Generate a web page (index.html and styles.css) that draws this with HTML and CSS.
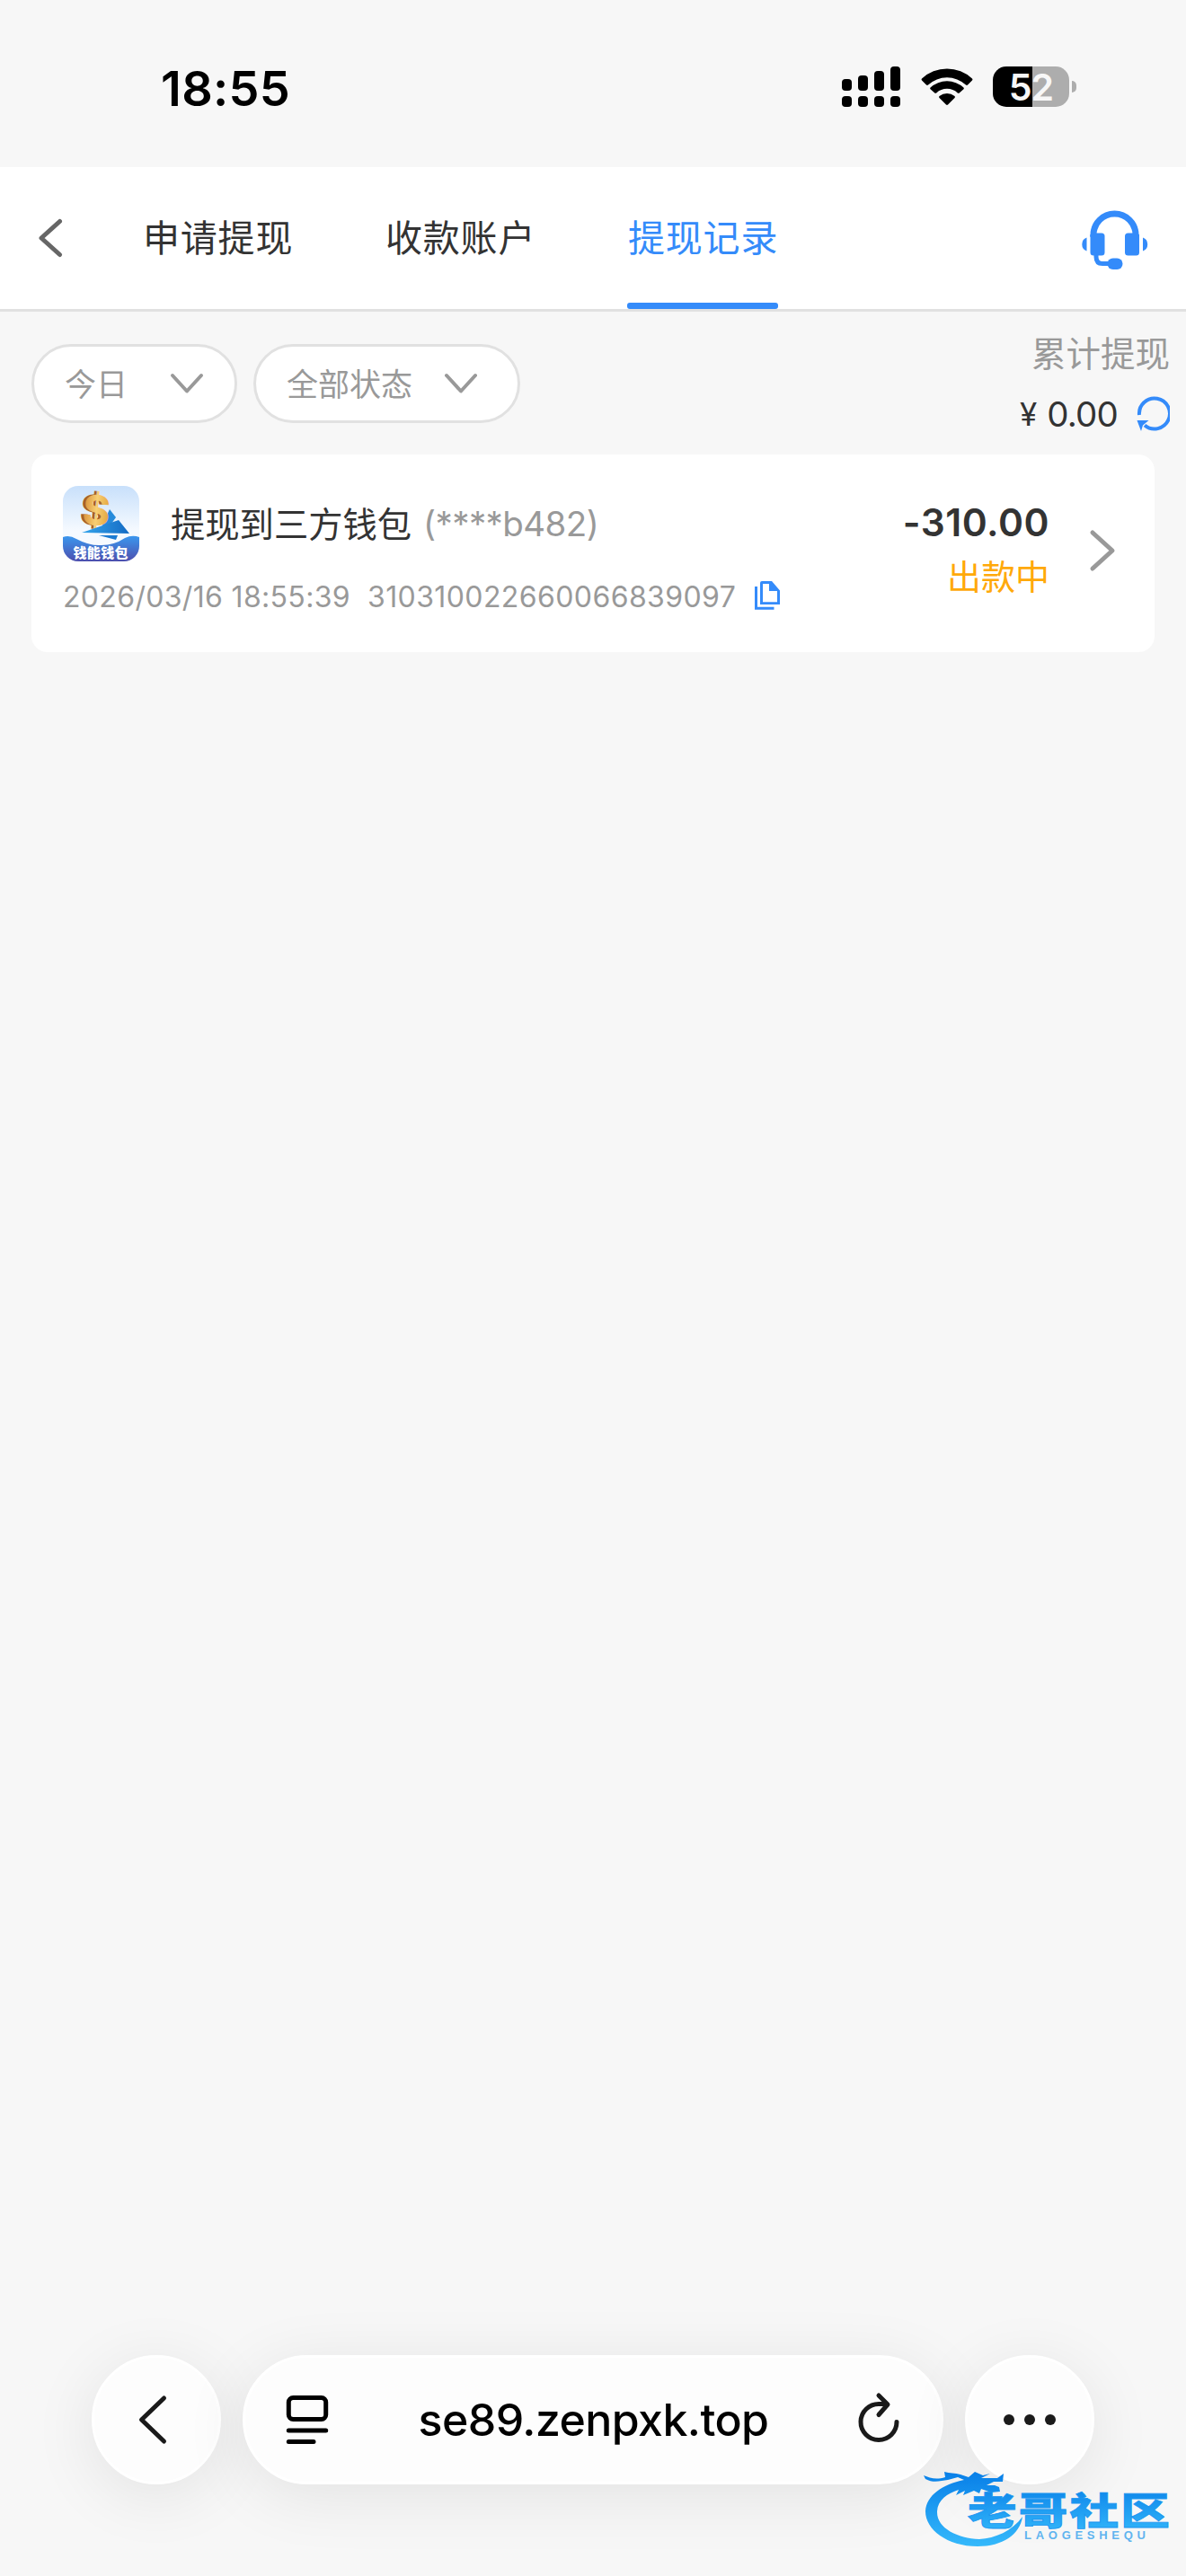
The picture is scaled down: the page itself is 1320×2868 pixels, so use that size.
FILE: index.html
```html
<!DOCTYPE html>
<html lang="zh-CN">
<head>
  <meta charset="UTF-8">
  <meta name="viewport" content="width=device-width, initial-scale=1.0">
  <title>提现记录</title>
  <link rel="stylesheet" href="styles.css">
</head>
<body>
  <div class="status-bar">
    <span class="time">18:55</span>
    <div class="status-icons">
      <svg class="signal" viewBox="0 0 66 46">
        <rect x="0" y="14" width="11" height="13" rx="4"/>
        <rect x="18" y="10" width="11" height="17" rx="4"/>
        <rect x="36" y="5" width="11" height="22" rx="4"/>
        <rect x="54" y="0" width="11" height="27" rx="4"/>
        <rect x="0" y="33" width="11" height="12" rx="4"/>
        <rect x="18" y="33" width="11" height="12" rx="4"/>
        <rect x="36" y="33" width="11" height="12" rx="4"/>
        <rect x="54" y="33" width="11" height="12" rx="4"/>
      </svg>
      <svg class="wifi" viewBox="0 0 58 43">
        <path d="M1 12.5Q0 13.5 1 14.500L6 19.500Q7 20.300 8 19.500A31 31 0 0 1 50 19.500Q51 20.300 52 19.500L57 14.500Q58 13.500 57 12.500A41 41 0 0 0 1 12.500Z"/>
        <path d="M10.500 22.500Q9.700 23.500 10.500 24.300L15.300 28.600Q16.300 29.200 17.200 28.400A17.500 17.500 0 0 1 40.800 28.400Q41.700 29.200 42.700 28.600L47.500 24.300Q48.300 23.500 47.500 22.500A27.500 27.500 0 0 0 10.500 22.500Z"/>
        <path d="M20.500 32Q19.500 33 20.500 34L28 41.500Q29 42.300 30 41.500L37.500 34Q38.500 33 37.500 32A13.500 13.500 0 0 0 20.500 32Z"/>
      </svg>
      <div class="battery"><span>52</span></div>
    </div>
  </div>

  <header class="nav">
    <svg class="back" viewBox="0 0 28 44"><path d="M24.500 3.500L4 22L24.500 40.500"/></svg>
    <nav class="tabs">
      <a class="tab">申请提现</a>
      <a class="tab">收款账户</a>
      <a class="tab active">提现记录</a>
    </nav>
    <svg class="service" viewBox="0 0 76 67">
      <path class="band" d="M14 30V27.500A23.500 23.500 0 0 1 61 27.500V30"/>
      <rect x="10.500" y="25.500" width="16" height="25" rx="3.500"/>
      <rect x="49" y="25.500" width="16" height="25" rx="3.500"/>
      <path d="M10.500 29V27H16V32Z M65 29V27H59V32Z"/>
      <path d="M6.500 30.500V45.500A8 8 0 0 1 6.500 30.500Z M69 30.500V45.500A8 8 0 0 0 69 30.500Z"/>
      <path class="mic" d="M17 49V52Q17 59.500 24 59.500H33"/>
      <rect x="29.500" y="53.500" width="17" height="12.500" rx="6.200"/>
    </svg>
  </header>

  <main>
    <section class="filters">
      <div class="select day"><span>今日</span><svg viewBox="0 0 36 22"><path d="M2 2L18 19.500L34 2"/></svg></div>
      <div class="select state"><span>全部状态</span><svg viewBox="0 0 36 22"><path d="M2 2L18 19.500L34 2"/></svg></div>
      <div class="total">
        <div class="total-label">累计提现</div>
        <div class="total-value">
          <span class="yen">¥</span><span class="sum">0.00</span>
          <svg viewBox="0 0 36 40"><path class="arc" d="M2.500 21A17 17 0 1 1 8.500 32.500"/><path class="head" d="M0 27H13L6.500 32.500L4.500 39Z"/></svg>
        </div>
      </div>
    </section>

    <section class="record">
      <div class="record-main">
        <div class="record-title">
          <svg class="wallet" viewBox="0 0 85 84">
            <defs>
              <linearGradient id="sky" x1="0" y1="0" x2="0" y2="1"><stop offset="0" stop-color="#c8e0fb"/><stop offset=".6" stop-color="#f6faff"/></linearGradient>
              <linearGradient id="sea" x1="0" y1="0" x2="0" y2="1"><stop offset="0" stop-color="#3b97ee"/><stop offset="1" stop-color="#4d4fae"/></linearGradient>
              <linearGradient id="gold" x1="0" y1="0" x2="1" y2="0"><stop offset="0" stop-color="#d98f35"/><stop offset=".5" stop-color="#f7cf74"/><stop offset="1" stop-color="#e2a33b"/></linearGradient>
              <linearGradient id="paper" x1="0" y1="0" x2="1" y2="0"><stop offset="0" stop-color="#35a5ec"/><stop offset="1" stop-color="#146bc4"/></linearGradient>
              <clipPath id="round"><rect width="85" height="84" rx="17"/></clipPath>
            </defs>
            <g clip-path="url(#round)">
              <rect width="85" height="84" fill="url(#sky)"/>
              <path d="M52 26L59 35L54 42L43 46Z" fill="#268bdb"/>
              <g transform="rotate(5 40 28)">
                <text class="dollar side" x="19" y="44">$</text>
                <text class="dollar" x="22" y="44">$</text>
              </g>
              <path d="M21 52L62 38L74 53Z" fill="url(#paper)"/>
              <path d="M40 55H61L59 60Z" fill="#1c7bd2"/>
              <path d="M0 57Q7 54 15 59Q30 67 43 66Q57 66 69 58Q77 54 85 57V84H0Z" fill="url(#sea)"/>
              <text class="wallet-name" x="11.500" y="79.500" textLength="61">钱能钱包</text>
            </g>
          </svg>
          <span class="title-text">提现到三方钱包</span>
          <span class="account">(****b482)</span>
        </div>
        <div class="record-meta">
          <span class="date">2026/03/16 18:55:39</span>
          <span class="order">310310022660066839097</span>
          <svg viewBox="0 0 28 32"><path class="line" d="M1.500 6V30.200H21.500"/><path d="M8 0H19L28 10.500V26H6V2Q6 0 8 0ZM9 3V23.200H25V11H16V3Z" fill-rule="evenodd"/></svg>
        </div>
      </div>
      <div class="record-amount">
        <div class="amount">-310.00</div>
        <div class="pending">出款中</div>
      </div>
      <svg class="more" viewBox="0 0 28 46"><path d="M3 3L25 23L3 43"/></svg>
    </section>
  </main>

  <footer class="browser-bar">
    <div class="circle">
      <svg class="prev" viewBox="0 0 32 54"><path d="M28.500 3L3.500 27L28.500 51"/></svg>
    </div>
    <div class="address">
      <svg class="reader" viewBox="0 0 46 54"><rect x="2.300" y="2.500" width="41.400" height="24" rx="5"/><path d="M2.300 39H43.700M2.300 51.500H30"/></svg>
      <span class="url">se89.zenpxk.top</span>
      <svg class="reload" viewBox="0 0 46 56"><path d="M42 32.500A20 20 0 1 1 22.500 12.500H30M22 3L32 13L22 24.500"/></svg>
    </div>
    <div class="circle">
      <svg class="dots" viewBox="0 0 60 12"><circle cx="7" cy="6" r="6"/><circle cx="30" cy="6" r="6"/><circle cx="53" cy="6" r="6"/></svg>
    </div>
  </footer>

  <svg class="watermark" viewBox="0 0 290 100">
    <defs>
      <linearGradient id="blue" x1="0" y1="0" x2="0" y2="1"><stop offset="0" stop-color="#087fe8"/><stop offset="1" stop-color="#35b9fb"/></linearGradient>
    </defs>
    <path fill="url(#blue)" d="M43 12C19 17 1 29 0 47C0 67 24 86 58 86C86 86 105 73 108 53C96 69 78 77 60 78C36 77 13 66 13 48C13 35 24 27 37 23L34 29L44 24L42 29L54 24L60 27L62 22L73 26L83 25L82 20L77 18H68L76 14L86 14L87 5L80 10L62 10L72 5L64 7L55 3L48 9L39 6C33 4 27 5 21 3L22 9C12 12 5 10-2 7L0 11C9 16 17 13 25 12L36 9Z"/>
    <g transform="translate(47 62) scale(1.3 1)"><text class="brand" x="0" y="0" textLength="173">老哥社区</text></g>
    <text class="brand-en" x="110" y="78" textLength="135">LAOGESHEQU</text>
  </svg>
</body>
</html>
```

FILE: styles.css
```css
* { box-sizing: border-box; }

html, body {
  margin: 0;
  padding: 0;
}

body {
  position: relative;
  display: flex;
  flex-direction: column;
  width: 1320px;
  height: 2868px;
  overflow: hidden;
  background: #f7f7f7;
  color: #333;
  font-family: Inter, "Noto Sans CJK SC", sans-serif;
}

svg {
  display: block;
  flex: none;
  overflow: visible;
}

/* status bar */
.status-bar {
  display: flex;
  justify-content: space-between;
  height: 186px;
  padding: 74px 122px 0 179px;
  color: #000;
}

.time {
  font-size: 54px;
  font-weight: 600;
  line-height: 49px;
  letter-spacing: 0.3px;
}

.status-icons {
  display: flex;
  align-items: flex-start;
}

.signal { width: 66px; height: 46px; }
.wifi { width: 58px; height: 43px; margin: 1px 22px 0; }

.battery {
  position: relative;
  width: 85px;
  height: 45px;
  margin-right: 8px;
  border-radius: 15px;
  background: linear-gradient(to right, #000 44px, #adadad 44px);
  color: #f7f7f7;
  font-size: 41px;
  font-weight: 600;
  line-height: 46px;
  text-align: center;
  letter-spacing: -1px;
}

.battery::after {
  content: "";
  position: absolute;
  top: 16px;
  right: -8px;
  width: 5px;
  height: 13px;
  border-radius: 0 5px 5px 0;
  background: #adadad;
}

/* top navigation */
.nav {
  display: flex;
  align-items: flex-start;
  height: 161px;
  padding: 0 41px 0 42px;
  background: #fff;
  border-bottom: 3px solid #e1e1e1;
}

.back {
  width: 28px;
  height: 44px;
  margin-top: 57px;
}

.back path {
  fill: none;
  stroke: #666;
  stroke-width: 5;
  stroke-linecap: round;
  stroke-linejoin: round;
}

.tabs {
  display: flex;
  gap: 102px;
  margin-left: 88px;
}

.tab {
  position: relative;
  width: 168px;
  height: 158px;
  padding-left: 1px;
  font-size: 41px;
  line-height: 158px;
  letter-spacing: 0.8px;
  white-space: nowrap;
}

.tab.active { color: #348bfa; }

.tab.active::after {
  content: "";
  position: absolute;
  left: 0;
  bottom: 0;
  width: 100%;
  height: 7px;
  border-radius: 3px;
  background: #348bfa;
}

.service {
  width: 76px;
  height: 67px;
  margin: 48px 0 0 auto;
  fill: #348bfa;
}

.service .band, .service .mic {
  fill: none;
  stroke: #348bfa;
  stroke-width: 7;
}

.service .mic { stroke-width: 5; }

/* filters */
.filters {
  display: flex;
  gap: 18px;
  height: 159px;
  padding: 36px 18px 0 35px;
}

.select {
  display: flex;
  align-items: center;
  justify-content: space-between;
  height: 88px;
  padding: 0 35px 0 34px;
  border: 3px solid #e1e1e1;
  border-radius: 44px;
  background: #fff;
  color: #999;
  font-size: 35px;
}

.select span { margin-top: -3px; }

.day { width: 229px; }
.state { width: 297px; padding-right: 45px; }

.select svg {
  width: 36px;
  height: 22px;
}

.select path, .more path {
  fill: none;
  stroke: #999;
  stroke-width: 4;
  stroke-linecap: round;
  stroke-linejoin: round;
}

.total {
  margin-left: auto;
  font-size: 38.5px;
}

.total-label {
  margin-top: -14px;
  color: #999;
  line-height: 50px;
  text-align: right;
}

.total-value {
  display: flex;
  align-items: center;
  justify-content: flex-end;
  height: 52px;
  margin-top: 16px;
}

.yen { margin-right: 11px; font-size: 35px; }
.sum { letter-spacing: -0.8px; }

.total-value svg {
  width: 37px;
  height: 40px;
  margin-left: 21px;
  overflow: hidden;
}

.arc { fill: none; stroke: #348bfa; stroke-width: 4; }
.head { fill: #348bfa; }

/* withdrawal record */
.record {
  display: flex;
  width: 1250px;
  height: 220px;
  margin-left: 35px;
  padding: 35px 44px 0 35px;
  border-radius: 18px;
  background: #fff;
}

.record-title {
  display: flex;
  align-items: center;
  height: 84px;
}

.wallet {
  width: 85px;
  height: 84px;
  margin-right: 35px;
}

.dollar {
  fill: url(#gold);
  font-family: Inter, sans-serif;
  font-size: 46px;
  font-weight: 800;
}

.dollar.side { fill: #a95f27; }

.wallet-name {
  fill: #fff;
  font-family: "Noto Sans CJK SC", sans-serif;
  font-size: 15px;
  font-weight: 900;
}

.title-text {
  margin-top: -3px;
  font-size: 38.3px;
}

.account {
  margin-left: 13px;
  color: #999;
  font-size: 38.5px;
  letter-spacing: -0.6px;
}

.record-meta {
  display: flex;
  align-items: center;
  height: 50px;
  margin-top: 14px;
  color: #999;
  font-size: 32px;
  letter-spacing: 0.33px;
}

.order {
  margin-left: 19px;
  letter-spacing: 0.4px;
}

.record-meta svg {
  width: 28px;
  height: 32px;
  margin: -3px 0 0 21px;
  fill: #348bfa;
}

.record-meta .line {
  fill: none;
  stroke: #348bfa;
  stroke-width: 3;
}

.record-amount {
  margin-left: auto;
  text-align: right;
}

.amount {
  margin-top: 15px;
  font-size: 42.5px;
  font-weight: 600;
  line-height: 52px;
  letter-spacing: 0.5px;
}

.pending {
  margin-top: 8px;
  color: #ffa90a;
  font-size: 38px;
  line-height: 52px;
}

.more {
  width: 28px;
  height: 46px;
  margin: 49px 0 0 45px;
}

.more path { stroke-width: 5; }

/* browser toolbar */
.browser-bar {
  display: flex;
  gap: 24px;
  margin: auto 102px 102px;
}

.circle, .address {
  display: flex;
  align-items: center;
  height: 144px;
  border: 3px solid #fff;
  border-radius: 72px;
  background: #fdfdfd;
  box-shadow: 0 12px 72px rgba(0, 0, 0, 0.085);
}

.circle {
  justify-content: center;
  width: 144px;
}

.address {
  flex: 1;
  justify-content: space-between;
  padding: 0 46px;
  color: #000;
}

.prev {
  width: 32px;
  height: 54px;
  margin-right: 9px;
}

.prev path, .reader, .reload {
  fill: none;
  stroke: #1a1a1a;
  stroke-width: 5;
  stroke-linecap: round;
  stroke-linejoin: round;
}

.reader { width: 46px; height: 54px; stroke: #000; }
.reload { width: 46px; height: 56px; margin: -4px -1px 0 0; }
.dots { width: 60px; height: 12px; fill: #1a1a1a; }

.url {
  font-size: 50px;
  font-weight: 500;
  letter-spacing: -0.55px;
}

/* site mark over the toolbar */
.watermark {
  position: absolute;
  left: 1030px;
  top: 2749px;
  width: 290px;
  height: 100px;
}

.brand {
  fill: url(#blue);
  stroke: #1a96f0;
  stroke-width: 0.8;
  font-family: "Noto Sans CJK SC", sans-serif;
  font-size: 42px;
  font-weight: 900;
}

.brand-en {
  fill: #5fb4ef;
  font-family: "Liberation Sans", sans-serif;
  font-size: 13px;
  font-weight: 700;
}
```
